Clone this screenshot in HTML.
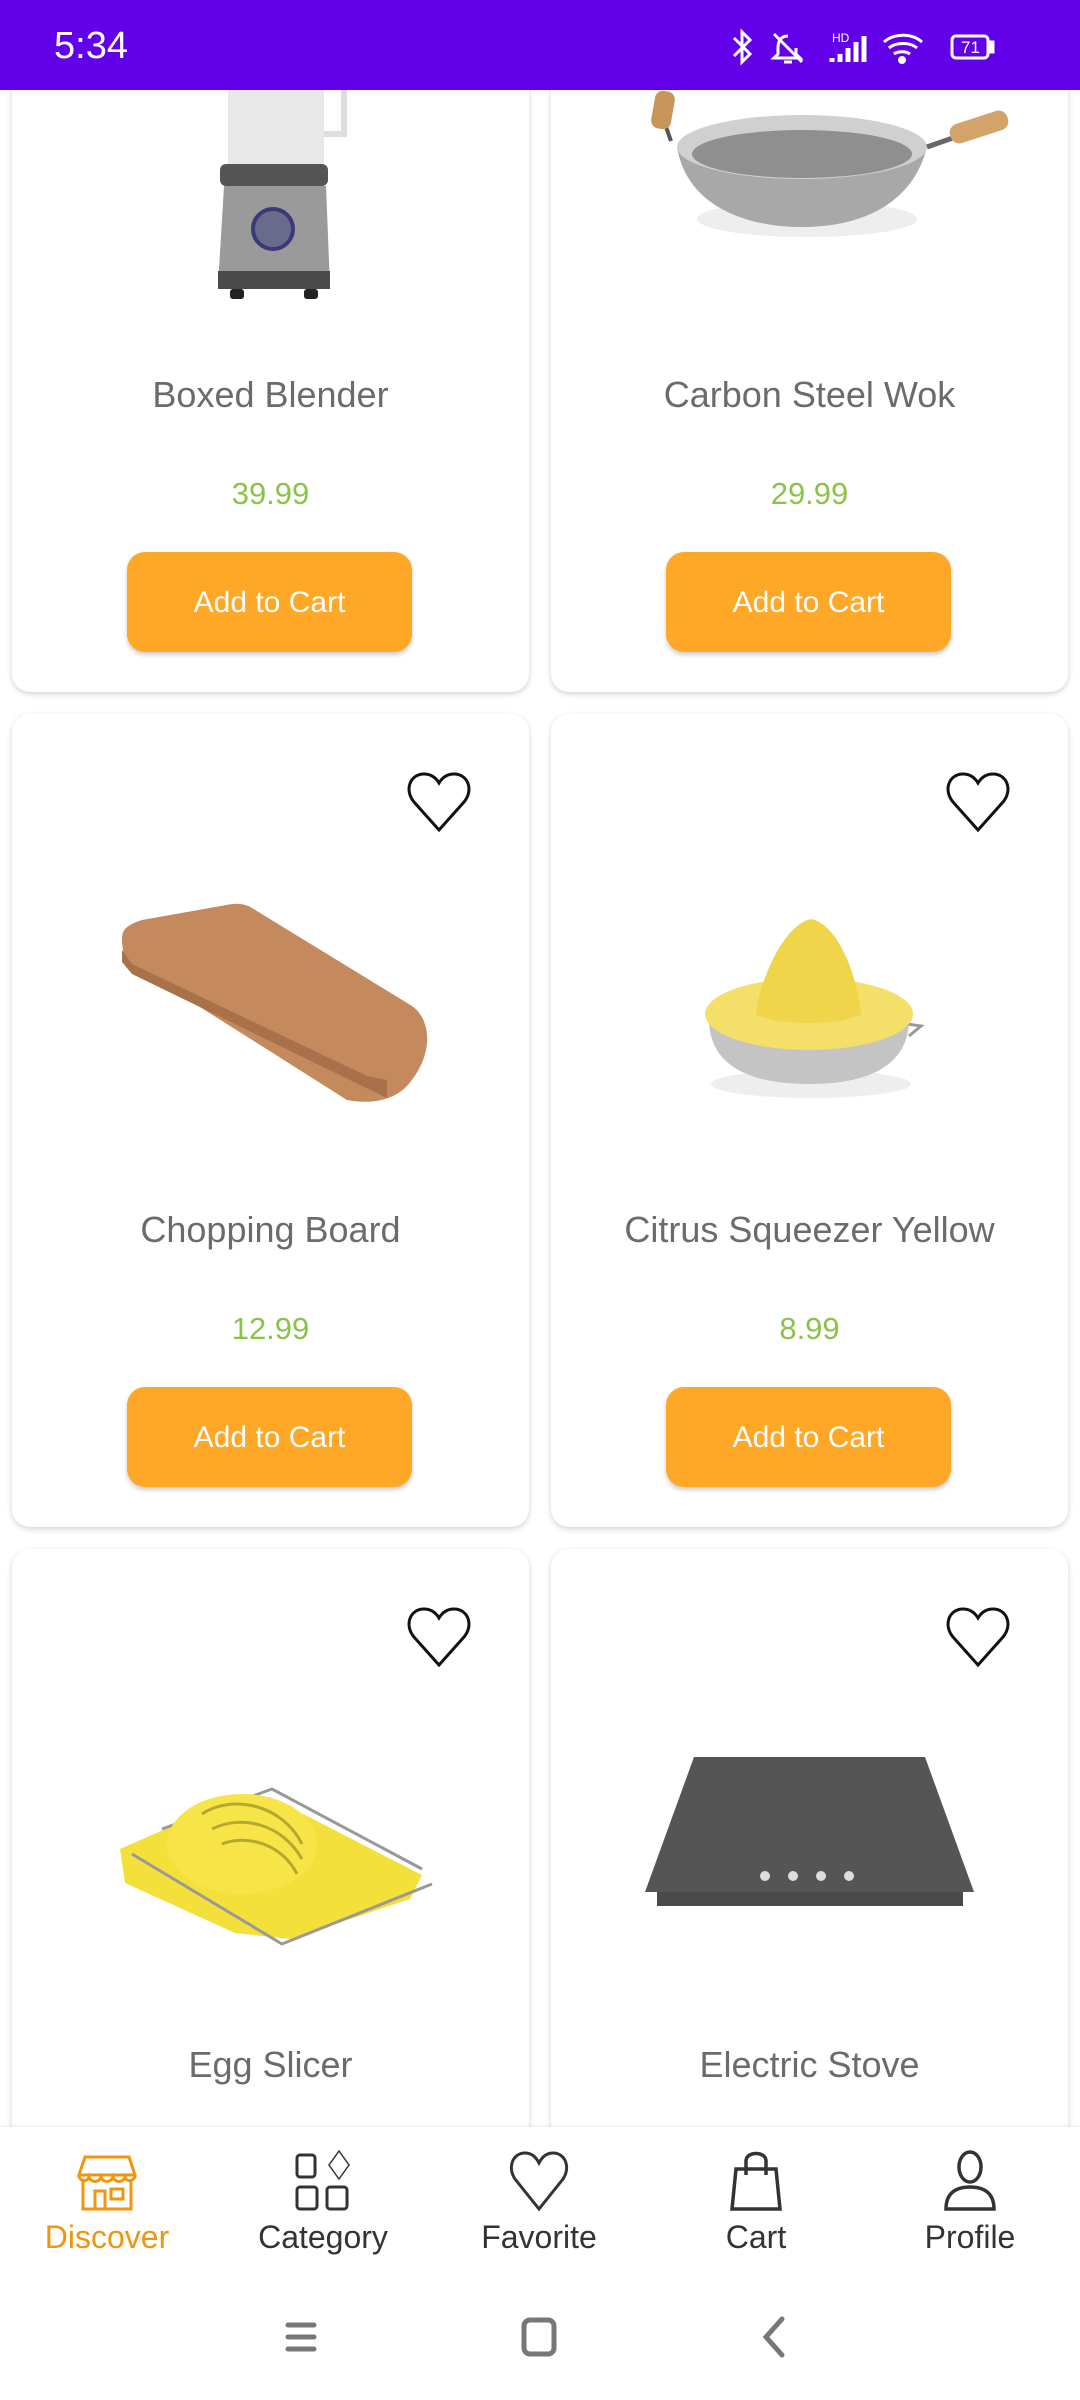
<!DOCTYPE html>
<html><head><meta charset="utf-8"><style>
*{margin:0;padding:0;box-sizing:border-box}
body{width:1080px;height:2400px;position:relative;overflow:hidden;background:#fff;font-family:"Liberation Sans",sans-serif}
.card{position:absolute;width:517px;height:813px;background:#fff;border-radius:18px;box-shadow:0 2px 6px rgba(0,0,0,.18)}
.card svg.art{position:absolute;left:0;top:0}
.title{position:absolute;left:0;right:0;top:495px;text-align:center;font-size:36px;color:#6b6b6b}
.price{position:absolute;left:0;right:0;top:597px;text-align:center;font-size:31px;color:#8bc34a}
.btn{position:absolute;left:115px;top:673px;width:285px;height:100px;background:#ffa726;border-radius:18px;color:#fff;font-size:30px;text-align:center;line-height:102px;box-shadow:0 3px 5px rgba(0,0,0,.2)}
.heart{position:absolute;left:394px;top:56px}
.status{position:absolute;left:0;top:0;width:1080px;height:90px;background:#6200ea;color:#fff;z-index:5}
.nav{position:absolute;left:0;top:2127px;width:1080px;height:273px;background:#fff;z-index:5;box-shadow:0 -1px 3px rgba(0,0,0,.08)}
.ni{position:absolute;top:22px;width:200px;margin-left:-100px;text-align:center;font-size:32px;color:#333}
.ni svg{display:block;margin:0 auto 6px}
</style></head><body>

<div class="status">
<div style="position:absolute;left:54px;top:25px;font-size:38px">5:34</div>
<svg style="position:absolute;left:728px;top:28px" width="290" height="40" viewBox="0 0 290 40" fill="none" stroke="#fff" stroke-width="3">
<path d="M6 10l16 16-8 8V4l8 8-16 16"/>
<path d="M60 8c-8 0-10 6-10 12v6l-4 4h26l-4-4v-6M46 6l28 28M56 34h8"/>
<text x="104" y="14" font-size="12" fill="#fff" stroke="none" font-family="Liberation Sans">HD</text>
<path d="M104 34v-4M112 34v-8M120 34v-14M128 34v-20M136 34v-26" stroke-width="5"/>
<path d="M156 14c10-9 28-9 38 0M161 20c7-6 21-6 28 0M166 26c4-3 12-3 16 0"/><circle cx="174" cy="32" r="2.5" fill="#fff"/>
<rect x="224" y="8" width="36" height="22" rx="4"/><rect x="262" y="14" width="3" height="10" fill="#fff"/>
<text x="233" y="25" font-size="17" fill="#fff" stroke="none" font-family="Liberation Sans">71</text>
</svg>
</div>

<!-- Row 1 -->
<div class="card" style="left:12px;top:-121px">
<svg class="art" width="517" height="813">
<rect x="216" y="200" width="96" height="90" fill="#e8e8e8"/>
<path d="M312 205h20v50h-20" fill="none" stroke="#ddd" stroke-width="6"/>
<rect x="208" y="285" width="108" height="22" rx="6" fill="#555"/>
<path d="M212 307h102l4 100H206z" fill="#9a9a9a"/>
<path d="M206 392h112v18H206z" fill="#4a4a4a"/>
<circle cx="261" cy="350" r="20" fill="#6a6a8a" stroke="#3a3a7a" stroke-width="4"/>
<rect x="218" y="410" width="14" height="10" rx="3" fill="#222"/><rect x="292" y="410" width="14" height="10" rx="3" fill="#222"/>
</svg>
<div class="title">Boxed Blender</div><div class="price">39.99</div><div class="btn">Add to Cart</div></div>

<div class="card" style="left:551px;top:-121px">
<svg class="art" width="517" height="813">
<ellipse cx="256" cy="340" rx="110" ry="18" fill="#eee"/>
<path d="M126 268c10 60 70 80 125 80s110-20 125-80z" fill="#a8a8a8"/>
<ellipse cx="251" cy="268" rx="125" ry="32" fill="#d0d0d0"/>
<ellipse cx="251" cy="275" rx="110" ry="24" fill="#8f8f8f"/>
<path d="M120 262l-10-28" stroke="#555" stroke-width="4"/><rect x="102" y="212" width="20" height="38" rx="8" fill="#c8965a" transform="rotate(10 112 231)"/>
<path d="M376 268l40-14" stroke="#666" stroke-width="5"/><rect x="398" y="238" width="60" height="20" rx="9" fill="#d2a46a" transform="rotate(-18 428 248)"/>
</svg>
<div class="title">Carbon Steel Wok</div><div class="price">29.99</div><div class="btn">Add to Cart</div></div>

<!-- Row 2 -->
<div class="card" style="left:12px;top:714px">
<svg class="heart" width="66" height="64" viewBox="0 0 66 64"><path d="M33 60L8 32C-2 20 4 4 18 4c7 0 12 4 15 9 3-5 8-9 15-9 14 0 20 16 10 28z" fill="none" stroke="#111" stroke-width="3"/></svg>
<svg class="art" width="517" height="813">
<path d="M110 224c0-10 8-14 20-18l90-16c8-1 16 1 20 4l160 98c20 14 22 50-5 80-15 16-40 18-60 14L120 250c-8-4-10-14-10-26z" fill="#c48a5e"/>
<path d="M110 236l10 14 235 112 20 4v18L120 260l-10-12z" fill="#a9714a"/>
</svg>
<div class="title">Chopping Board</div><div class="price">12.99</div><div class="btn">Add to Cart</div></div>

<div class="card" style="left:551px;top:714px">
<svg class="heart" width="66" height="64" viewBox="0 0 66 64"><path d="M33 60L8 32C-2 20 4 4 18 4c7 0 12 4 15 9 3-5 8-9 15-9 14 0 20 16 10 28z" fill="none" stroke="#111" stroke-width="3"/></svg>
<svg class="art" width="517" height="813">
<ellipse cx="260" cy="370" rx="100" ry="14" fill="#eee"/>
<path d="M158 305c0 40 30 65 100 65s100-25 100-65z" fill="#c4c4c4"/>
<path d="M356 310l14 2-12 10" fill="none" stroke="#999" stroke-width="3"/>
<ellipse cx="258" cy="300" rx="104" ry="36" fill="#f3df6a"/>
<path d="M205 300c5-40 30-90 55-95 25 5 45 50 50 95-20 12-85 12-105 0z" fill="#f0d54a"/>
</svg>
<div class="title">Citrus Squeezer Yellow</div><div class="price">8.99</div><div class="btn">Add to Cart</div></div>

<!-- Row 3 -->
<div class="card" style="left:12px;top:1549px">
<svg class="heart" width="66" height="64" viewBox="0 0 66 64"><path d="M33 60L8 32C-2 20 4 4 18 4c7 0 12 4 15 9 3-5 8-9 15-9 14 0 20 16 10 28z" fill="none" stroke="#111" stroke-width="3"/></svg>
<svg class="art" width="517" height="813">
<path d="M108 300l50-22 100-30 152 78-12 24-120 40-55-6-110-50z" fill="#f3e03a"/>
<path d="M120 305l150 90 150-60M150 280l110-40 150 80" fill="none" stroke="#999" stroke-width="3"/>
<ellipse cx="230" cy="295" rx="75" ry="50" fill="#f7e547"/>
<path d="M190 265c30-20 80-10 100 30M200 280c30-15 70-5 90 30M210 295c25-10 60 0 75 30" fill="none" stroke="#b5a830" stroke-width="3"/>
</svg>
<div class="title">Egg Slicer</div></div>

<div class="card" style="left:551px;top:1549px">
<svg class="heart" width="66" height="64" viewBox="0 0 66 64"><path d="M33 60L8 32C-2 20 4 4 18 4c7 0 12 4 15 9 3-5 8-9 15-9 14 0 20 16 10 28z" fill="none" stroke="#111" stroke-width="3"/></svg>
<svg class="art" width="517" height="813">
<path d="M143 208h231l49 135H94z" fill="#555"/>
<rect x="106" y="343" width="306" height="14" fill="#4a4a4a"/>
<circle cx="214" cy="327" r="5" fill="#ddd"/><circle cx="242" cy="327" r="5" fill="#ddd"/><circle cx="270" cy="327" r="5" fill="#ddd"/><circle cx="298" cy="327" r="5" fill="#ddd"/>
</svg>
<div class="title">Electric Stove</div></div>

<div class="nav">
<div class="ni" style="left:107px;color:#f0950e">
<svg width="64" height="64" viewBox="0 0 64 64" fill="none" stroke="#f0950e" stroke-width="3"><path d="M10 8h44l6 18H4zM4 26c0 6 8 8 10 2 2 6 10 6 12 0 2 6 10 6 12 0 2 6 10 6 12 0 2 6 10 4 10-2M8 32v28h48V32M20 60V42h10v18M36 40h12v10H36z"/></svg>Discover</div>
<div class="ni" style="left:323px">
<svg width="64" height="64" viewBox="0 0 64 64" fill="none" stroke="#333" stroke-width="3"><rect x="6" y="6" width="18" height="22" rx="3"/><path d="M48 2l10 14-10 14-10-14z" stroke-width="1.5"/><rect x="6" y="38" width="20" height="22" rx="3"/><rect x="36" y="38" width="20" height="22" rx="3"/></svg>Category</div>
<div class="ni" style="left:539px">
<svg width="64" height="64" viewBox="0 0 64 64" fill="none" stroke="#333" stroke-width="3"><path d="M32 60L8 30C0 18 6 4 18 4c7 0 11 4 14 10 3-6 7-10 14-10 12 0 18 14 10 26z"/></svg>Favorite</div>
<div class="ni" style="left:756px">
<svg width="64" height="64" viewBox="0 0 64 64" fill="none" stroke="#333" stroke-width="3.5"><path d="M12 20h40l4 40H8zM22 26V12c0-10 20-10 20 0v14"/></svg>Cart</div>
<div class="ni" style="left:970px">
<svg width="64" height="64" viewBox="0 0 64 64" fill="none" stroke="#333" stroke-width="3.5"><ellipse cx="32" cy="18" rx="11" ry="15"/><path d="M8 60c0-16 10-22 24-22s24 6 24 22z"/></svg>Profile</div>
<svg style="position:absolute;left:280px;top:180px" width="520" height="60" viewBox="0 0 520 60" fill="none" stroke="#777" stroke-width="5" stroke-linecap="round">
<path d="M8 18h26M8 30h26M8 42h26"/><rect x="244" y="13" width="30" height="34" rx="6"/><path d="M502 12l-16 18 16 18"/></svg>
</div>
</body></html>
